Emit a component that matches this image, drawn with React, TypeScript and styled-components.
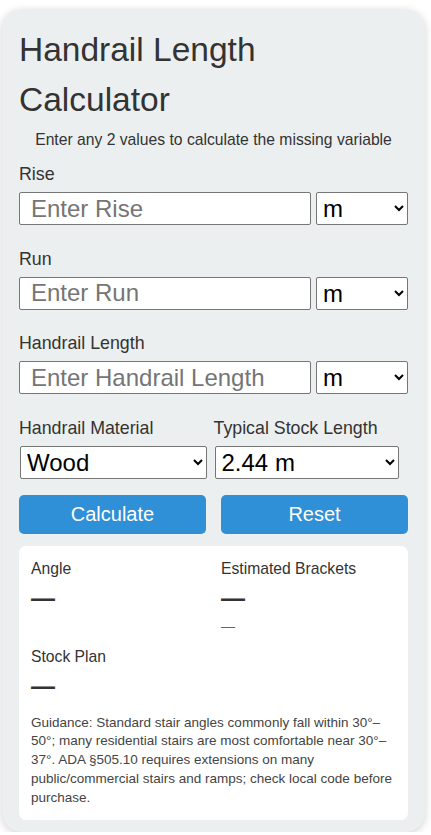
import React from 'react';
import styled, { createGlobalStyle } from 'styled-components';

const GlobalStyle = createGlobalStyle`
  body {
    margin: 0;
    background: #ffffff;
    font-family: "Liberation Sans", Arial, sans-serif;
    color: #333333;
  }
  * { box-sizing: border-box; }
`

const Card = styled.div`
  margin: 9px 6px 0 2px;
  padding: 16px 17px 12px;
  background: #ecefef;
  border-radius: 20px;
  box-shadow: 0 2px 8px rgba(0, 0, 0, 0.18);
`
const Title = styled.h1`
  margin: 0;
  font-size: 33.5px;
  line-height: 50px;
  font-weight: normal;
  color: #333;
`
const Subtitle = styled.p`
  margin: 3px 0 12px;
  font-size: 15.7px;
  line-height: 24px;
  text-align: center;
  color: #333;
`
const Field = styled.div`
  margin-bottom: 23.5px;
`
const Label = styled.label`
  display: block;
  font-size: 17.8px;
  line-height: 21px;
  margin-bottom: 7px;
  color: #333;
`
const Row = styled.div`
  display: flex;
  gap: 5px;
`
const Input = styled.input`
  flex: 1;
  min-width: 0;
  height: 33px;
  padding: 0 11px;
  font-family: inherit;
  font-size: 24px;
  border: 1px solid #767676;
  border-radius: 2px;
  background: #fff;
  &::placeholder { color: #757575; }
`
const Select = styled.select<{ $w?: string }>`
  width: ${p => p.$w || '92px'};
  height: 33px;
  padding: 0 2px;
  font-family: inherit;
  font-size: 24px;
  color: #000;
  border: 1px solid #767676;
  border-radius: 2px;
  background: #fff;
`
const StockGrid = styled.div`
  display: grid;
  grid-template-columns: 1fr 1fr;
  margin-bottom: 16px;
  & select { margin-left: 1px; }
`
const Buttons = styled.div`
  display: grid;
  grid-template-columns: 1fr 1fr;
  gap: 15px;
  margin-bottom: 12px;
`
const Button = styled.button`
  height: 39px;
  border: none;
  border-radius: 5px;
  background: #2f90d8;
  color: #fff;
  font-family: inherit;
  font-size: 20px;
`
const Results = styled.div`
  background: #fff;
  border-radius: 7px;
  padding: 12px;
`
const ResultGrid = styled.div`
  display: grid;
  grid-template-columns: 1fr 1fr;
  gap: 10px 15px;
`
const ResultLabel = styled.div`
  font-size: 15.7px;
  line-height: 22px;
  color: #333;
`
const ResultValue = styled.div`
  font-size: 24px;
  line-height: 36px;
  font-weight: bold;
  color: #333;
`
const ResultNote = styled.div`
  font-size: 14px;
  line-height: 20px;
  color: #666;
`
const Guidance = styled.p`
  margin: 10px 0 0;
  font-size: 13.5px;
  line-height: 18.9px;
  color: #444;
`

export default function App() {
  return (
    <>
      <GlobalStyle />
      <Card>
        <Title>Handrail Length Calculator</Title>
        <Subtitle>Enter any 2 values to calculate the missing variable</Subtitle>
        {['Rise', 'Run', 'Handrail Length'].map(name => (
          <Field key={name}>
            <Label>{name}</Label>
            <Row>
              <Input placeholder={`Enter ${name}`} />
              <Select defaultValue="m">
                <option value="m">m</option>
                <option value="cm">cm</option>
                <option value="ft">ft</option>
                <option value="in">in</option>
              </Select>
            </Row>
          </Field>
        ))}
        <StockGrid>
          <div>
            <Label>Handrail Material</Label>
            <Select $w="96%" defaultValue="wood">
              <option value="wood">Wood</option>
              <option value="steel">Steel</option>
            </Select>
          </div>
          <div>
            <Label>Typical Stock Length</Label>
            <Select $w="95%" defaultValue="2.44">
              <option value="2.44">2.44 m</option>
              <option value="3.66">3.66 m</option>
            </Select>
          </div>
        </StockGrid>
        <Buttons>
          <Button>Calculate</Button>
          <Button>Reset</Button>
        </Buttons>
        <Results>
          <ResultGrid>
            <div>
              <ResultLabel>Angle</ResultLabel>
              <ResultValue>—</ResultValue>
            </div>
            <div>
              <ResultLabel>Estimated Brackets</ResultLabel>
              <ResultValue>—</ResultValue>
              <ResultNote>—</ResultNote>
            </div>
            <div>
              <ResultLabel>Stock Plan</ResultLabel>
              <ResultValue>—</ResultValue>
            </div>
          </ResultGrid>
          <Guidance>
            Guidance: Standard stair angles commonly fall within 30°–50°; many residential stairs are most comfortable near 30°–37°. ADA §505.10 requires extensions on many public/commercial stairs and ramps; check local code before purchase.
          </Guidance>
        </Results>
      </Card>
    </>
  )
}
